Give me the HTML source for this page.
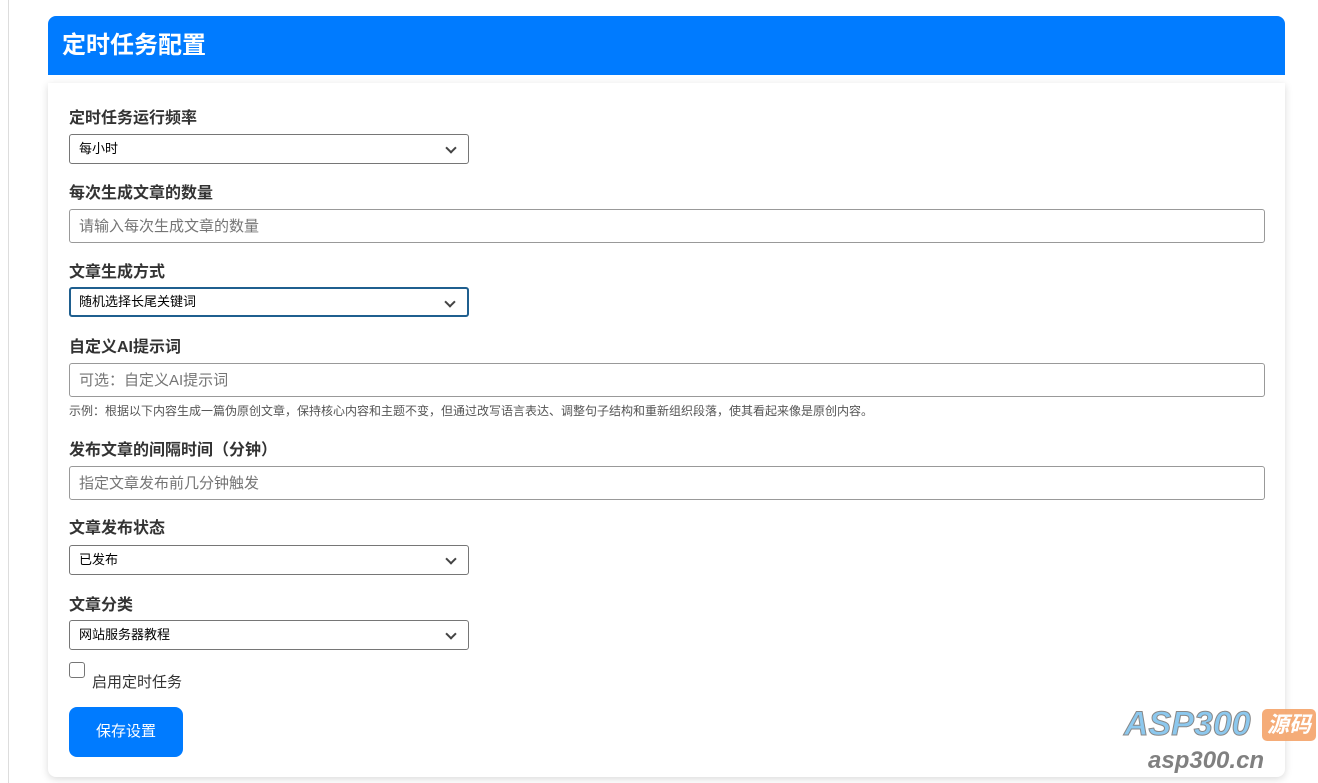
<!DOCTYPE html>
<html><head><meta charset="utf-8"><style>
body{margin:0;width:1318px;height:783px;background:#fff;font-family:"Liberation Sans","Noto Sans CJK SC",sans-serif;position:relative;overflow:hidden;color:#212529}
.vl{position:absolute;left:8px;top:0;width:1px;height:783px;background:#ddd}
.hdr{position:absolute;left:48px;top:16px;width:1237px;height:59px;background:#007bff;border-radius:8px 8px 0 0}
.hdr h1{margin:0;position:absolute;left:14px;top:14px;font-size:24px;font-weight:bold;color:#fff;line-height:32px}
.card{position:absolute;left:48px;top:83px;width:1237px;height:694px;background:#fff;border-radius:0 0 8px 8px;box-shadow:0 2px 8px rgba(0,0,0,.15)}
.lb{position:absolute;left:69px;font-size:16px;font-weight:bold;line-height:20px;color:#333;margin-top:2px}
.sel,.inp{position:absolute;left:69px;box-sizing:border-box;border:1px solid #767676;border-radius:3px;background:#fff;font-size:13px;color:#000;padding-left:9px}
.sel{width:400px;height:30px;line-height:28px}
.sel:after{content:"";position:absolute;right:13px;top:9px;width:6px;height:6px;border-right:2px solid #444;border-bottom:2px solid #444;transform:rotate(45deg)}
.inp{width:1196px;height:34px;line-height:34px;font-size:15px;color:#757575;border-color:#999}
.hint{position:absolute;left:69px;top:402px;font-size:12px;color:#555}
.btn{position:absolute;left:69px;top:707px;width:114px;height:50px;background:#007bff;border-radius:8px;color:#fff;font-size:15px;line-height:50px;text-align:center}
.cb{position:absolute;left:69px;top:662px;width:14px;height:14px;border:1px solid #767676;border-radius:3px}
</style></head><body>
<div class="vl"></div>
<div class="card"></div>
<div class="hdr"><h1>定时任务配置</h1></div>
<div class="lb" style="top:107px">定时任务运行频率</div>
<div class="sel" style="top:134px">每小时</div>
<div class="lb" style="top:182px">每次生成文章的数量</div>
<div class="inp" style="top:209px">请输入每次生成文章的数量</div>
<div class="lb" style="top:261px">文章生成方式</div>
<div class="sel" style="top:287px;border:2px solid #1f5f8f;line-height:26px;padding-left:8px">随机选择长尾关键词</div>
<div class="lb" style="top:336px">自定义AI提示词</div>
<div class="inp" style="top:363px">可选：自定义AI提示词</div>
<div class="hint">示例：根据以下内容生成一篇伪原创文章，保持核心内容和主题不变，但通过改写语言表达、调整句子结构和重新组织段落，使其看起来像是原创内容。</div>
<div class="lb" style="top:439px">发布文章的间隔时间（分钟）</div>
<div class="inp" style="top:466px">指定文章发布前几分钟触发</div>
<div class="lb" style="top:517px">文章发布状态</div>
<div class="sel" style="top:545px">已发布</div>
<div class="lb" style="top:594px">文章分类</div>
<div class="sel" style="top:620px">网站服务器教程</div>
<div class="cb"></div>
<div style="position:absolute;left:92px;top:671px;font-size:15px;color:#333">启用定时任务</div>
<div class="btn">保存设置</div>
<div style="position:absolute;left:1124px;top:704px;font-size:34px;font-weight:bold;font-style:italic;color:#8cc8ee;-webkit-text-stroke:1px #888;line-height:40px">ASP300</div>
<div style="position:absolute;left:1262px;top:709px;width:54px;height:32px;background:#f4a46a;border-radius:5px;color:#fff;font-size:22px;font-weight:bold;font-style:italic;line-height:32px;text-align:center;opacity:.9">源码</div>
<div style="position:absolute;left:1148px;top:746px;font-size:24px;font-weight:bold;font-style:italic;color:#808080;line-height:30px">asp300.cn</div>
</body></html>
